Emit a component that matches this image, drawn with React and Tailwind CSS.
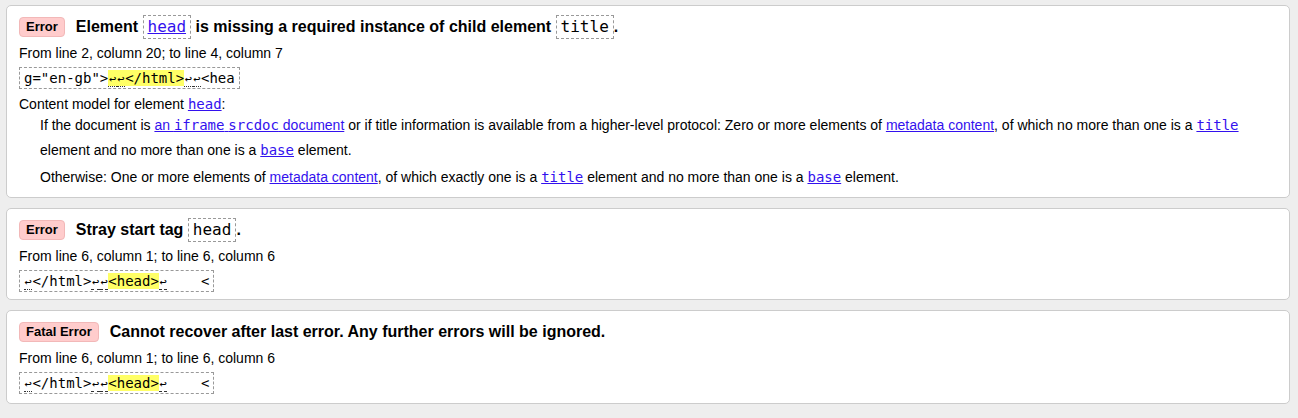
import React from "react";

const mono = "font-['DejaVu_Sans_Mono',monospace]";
const link = "text-[#3311ee] underline";

// line-break marker used in the source extracts
function Lf({ dashed }) {
  return (
    <span
      className={
        dashed
          ? "inline-block w-[8.43px] text-center text-[12px] leading-[13px] border-b border-dashed border-[#333]"
          : "inline-block w-[8.43px] text-center text-[12px] leading-[13px] border-b border-dotted border-[#333]"
      }
    >
      ↩
    </span>
  );
}

function Badge({ children }) {
  return (
    <span className="inline-block align-middle relative -top-[1px] mr-[11px] px-[6px] text-[13px] leading-[18px] font-bold bg-[#ffcccc] border border-[#f2b8b8] rounded-[4px]">
      {children}
    </span>
  );
}

function Code({ children }) {
  return (
    <code className={`${mono} inline-block font-normal text-[16px] leading-[22px] px-[4px] border border-dashed border-[#999999]`}>
      {children}
    </code>
  );
}

function Card({ badge, title, from, extract, last, children }) {
  return (
    <div
      className={
        last
          ? "bg-white border border-[#cccccc] rounded-[5px] pl-[12px] pr-3 pt-[8px] pb-[9px]"
          : "bg-white border border-[#cccccc] rounded-[5px] pl-[12px] pr-3 pt-[8px] pb-[7px]"
      }
    >
      <p className="text-[16px] leading-[26px] font-bold">
        <Badge>{badge}</Badge>
        {title}
      </p>
      <p className="mt-[4px] text-[14px] leading-[18px]">{from}</p>
      <div className="mt-[5px]">
        <code className={`${mono} block w-fit whitespace-pre text-[14px] leading-[20px] px-[4px] border border-dashed border-[#999999]`}>
          {extract}
        </code>
      </div>
      {children}
    </div>
  );
}

export default function App() {
  return (
    <div className="min-h-screen bg-[#eeeeee] pt-[5px] pl-[6px] pr-[8px] flex flex-col gap-[10px] font-['Liberation_Sans',Arial,sans-serif] text-black">
      <Card
        badge="Error"
        title={
          <>
            Element{" "}
            <Code>
              <span className={link}>head</span>
            </Code>{" "}
            is missing a required instance of child element <Code>title</Code>.
          </>
        }
        from="From line 2, column 20; to line 4, column 7"
        extract={
          <>
            g="en-gb"&gt;
            <span className="bg-[#ffff66]">
              <Lf />
              <Lf />
              &lt;/html&gt;
            </span>
            <Lf />
            <Lf />
            &lt;hea
          </>
        }
      >
        <dl className="mt-[6px] text-[14px]">
          <dt className="leading-[18px]">
            Content model for element <a className={`${link} ${mono}`}>head</a>:
          </dt>
          <dd className="pl-[21px] leading-[25px]">
            If the document is{" "}
            <a className={link}>
              an <span className={mono}>iframe</span> <span className={mono}>srcdoc</span> document
            </a>{" "}
            or if title information is available from a higher-level protocol: Zero or more elements of{" "}
            <a className={link}>metadata content</a>, of which no more than one is a{" "}
            <a className={`${link} ${mono}`}>title</a> element and no more than one is a{" "}
            <a className={`${link} ${mono}`}>base</a> element.
          </dd>
          <dd className="mt-[2px] pl-[21px] leading-[25px]">
            Otherwise: One or more elements of <a className={link}>metadata content</a>, of which exactly one is a{" "}
            <a className={`${link} ${mono}`}>title</a> element and no more than one is a{" "}
            <a className={`${link} ${mono}`}>base</a> element.
          </dd>
        </dl>
      </Card>

      <Card
        badge="Error"
        title={
          <>
            Stray start tag <Code>head</Code>.
          </>
        }
        from="From line 6, column 1; to line 6, column 6"
        extract={
          <>
            <Lf />
            &lt;/html&gt;
            <Lf dashed />
            <Lf dashed />
            <span className="bg-[#ffff66]">&lt;head&gt;</span>
            <Lf dashed />
            {"    <"}
          </>
        }
      />

      <Card
        last
        badge="Fatal Error"
        title="Cannot recover after last error. Any further errors will be ignored."
        from="From line 6, column 1; to line 6, column 6"
        extract={
          <>
            <Lf />
            &lt;/html&gt;
            <Lf dashed />
            <Lf dashed />
            <span className="bg-[#ffff66]">&lt;head&gt;</span>
            <Lf dashed />
            {"    <"}
          </>
        }
      />
    </div>
  );
}
